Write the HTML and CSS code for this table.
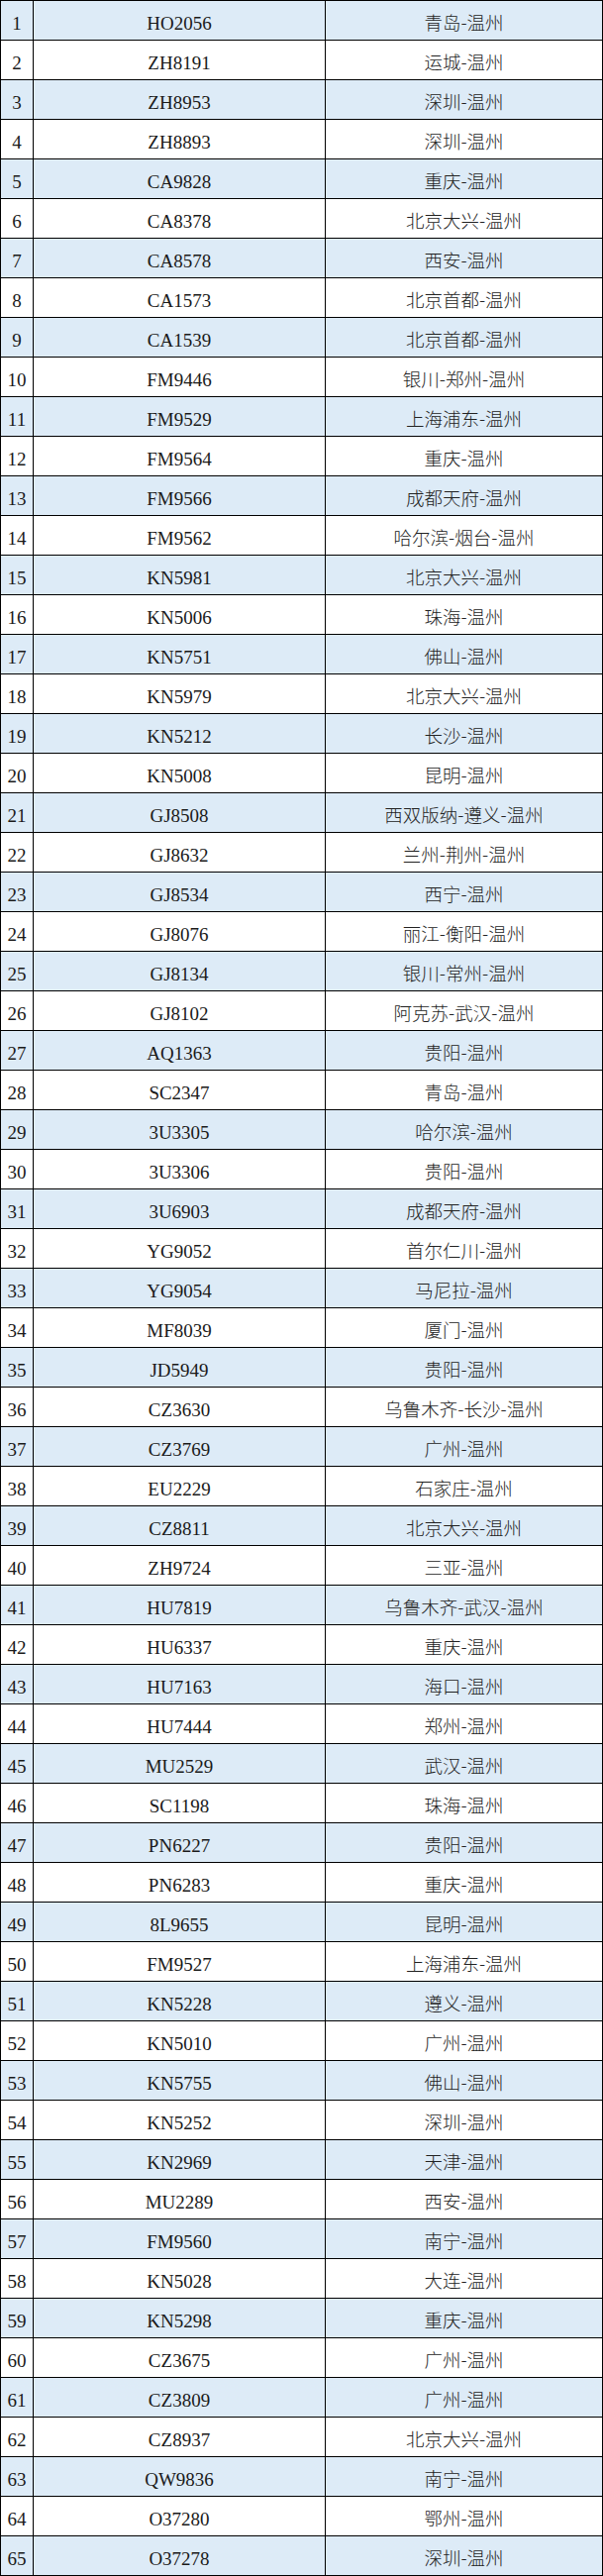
FILE: index.html
```html
<!DOCTYPE html>
<html lang="zh-CN">
<head>
<meta charset="utf-8">
<title>航班列表</title>
<link rel="stylesheet" href="styles.css">
</head>
<body>
<div class="table">
  <div class="row alt"><div class="cell idx">1</div><div class="cell code">HO2056</div><div class="cell route">青岛-温州</div></div>
  <div class="row"><div class="cell idx">2</div><div class="cell code">ZH8191</div><div class="cell route">运城-温州</div></div>
  <div class="row alt"><div class="cell idx">3</div><div class="cell code">ZH8953</div><div class="cell route">深圳-温州</div></div>
  <div class="row"><div class="cell idx">4</div><div class="cell code">ZH8893</div><div class="cell route">深圳-温州</div></div>
  <div class="row alt"><div class="cell idx">5</div><div class="cell code">CA9828</div><div class="cell route">重庆-温州</div></div>
  <div class="row"><div class="cell idx">6</div><div class="cell code">CA8378</div><div class="cell route">北京大兴-温州</div></div>
  <div class="row alt"><div class="cell idx">7</div><div class="cell code">CA8578</div><div class="cell route">西安-温州</div></div>
  <div class="row"><div class="cell idx">8</div><div class="cell code">CA1573</div><div class="cell route">北京首都-温州</div></div>
  <div class="row alt"><div class="cell idx">9</div><div class="cell code">CA1539</div><div class="cell route">北京首都-温州</div></div>
  <div class="row"><div class="cell idx">10</div><div class="cell code">FM9446</div><div class="cell route">银川-郑州-温州</div></div>
  <div class="row alt"><div class="cell idx">11</div><div class="cell code">FM9529</div><div class="cell route">上海浦东-温州</div></div>
  <div class="row"><div class="cell idx">12</div><div class="cell code">FM9564</div><div class="cell route">重庆-温州</div></div>
  <div class="row alt"><div class="cell idx">13</div><div class="cell code">FM9566</div><div class="cell route">成都天府-温州</div></div>
  <div class="row"><div class="cell idx">14</div><div class="cell code">FM9562</div><div class="cell route">哈尔滨-烟台-温州</div></div>
  <div class="row alt"><div class="cell idx">15</div><div class="cell code">KN5981</div><div class="cell route">北京大兴-温州</div></div>
  <div class="row"><div class="cell idx">16</div><div class="cell code">KN5006</div><div class="cell route">珠海-温州</div></div>
  <div class="row alt"><div class="cell idx">17</div><div class="cell code">KN5751</div><div class="cell route">佛山-温州</div></div>
  <div class="row"><div class="cell idx">18</div><div class="cell code">KN5979</div><div class="cell route">北京大兴-温州</div></div>
  <div class="row alt"><div class="cell idx">19</div><div class="cell code">KN5212</div><div class="cell route">长沙-温州</div></div>
  <div class="row"><div class="cell idx">20</div><div class="cell code">KN5008</div><div class="cell route">昆明-温州</div></div>
  <div class="row alt"><div class="cell idx">21</div><div class="cell code">GJ8508</div><div class="cell route">西双版纳-遵义-温州</div></div>
  <div class="row"><div class="cell idx">22</div><div class="cell code">GJ8632</div><div class="cell route">兰州-荆州-温州</div></div>
  <div class="row alt"><div class="cell idx">23</div><div class="cell code">GJ8534</div><div class="cell route">西宁-温州</div></div>
  <div class="row"><div class="cell idx">24</div><div class="cell code">GJ8076</div><div class="cell route">丽江-衡阳-温州</div></div>
  <div class="row alt"><div class="cell idx">25</div><div class="cell code">GJ8134</div><div class="cell route">银川-常州-温州</div></div>
  <div class="row"><div class="cell idx">26</div><div class="cell code">GJ8102</div><div class="cell route">阿克苏-武汉-温州</div></div>
  <div class="row alt"><div class="cell idx">27</div><div class="cell code">AQ1363</div><div class="cell route">贵阳-温州</div></div>
  <div class="row"><div class="cell idx">28</div><div class="cell code">SC2347</div><div class="cell route">青岛-温州</div></div>
  <div class="row alt"><div class="cell idx">29</div><div class="cell code">3U3305</div><div class="cell route">哈尔滨-温州</div></div>
  <div class="row"><div class="cell idx">30</div><div class="cell code">3U3306</div><div class="cell route">贵阳-温州</div></div>
  <div class="row alt"><div class="cell idx">31</div><div class="cell code">3U6903</div><div class="cell route">成都天府-温州</div></div>
  <div class="row"><div class="cell idx">32</div><div class="cell code">YG9052</div><div class="cell route">首尔仁川-温州</div></div>
  <div class="row alt"><div class="cell idx">33</div><div class="cell code">YG9054</div><div class="cell route">马尼拉-温州</div></div>
  <div class="row"><div class="cell idx">34</div><div class="cell code">MF8039</div><div class="cell route">厦门-温州</div></div>
  <div class="row alt"><div class="cell idx">35</div><div class="cell code">JD5949</div><div class="cell route">贵阳-温州</div></div>
  <div class="row"><div class="cell idx">36</div><div class="cell code">CZ3630</div><div class="cell route">乌鲁木齐-长沙-温州</div></div>
  <div class="row alt"><div class="cell idx">37</div><div class="cell code">CZ3769</div><div class="cell route">广州-温州</div></div>
  <div class="row"><div class="cell idx">38</div><div class="cell code">EU2229</div><div class="cell route">石家庄-温州</div></div>
  <div class="row alt"><div class="cell idx">39</div><div class="cell code">CZ8811</div><div class="cell route">北京大兴-温州</div></div>
  <div class="row"><div class="cell idx">40</div><div class="cell code">ZH9724</div><div class="cell route">三亚-温州</div></div>
  <div class="row alt"><div class="cell idx">41</div><div class="cell code">HU7819</div><div class="cell route">乌鲁木齐-武汉-温州</div></div>
  <div class="row"><div class="cell idx">42</div><div class="cell code">HU6337</div><div class="cell route">重庆-温州</div></div>
  <div class="row alt"><div class="cell idx">43</div><div class="cell code">HU7163</div><div class="cell route">海口-温州</div></div>
  <div class="row"><div class="cell idx">44</div><div class="cell code">HU7444</div><div class="cell route">郑州-温州</div></div>
  <div class="row alt"><div class="cell idx">45</div><div class="cell code">MU2529</div><div class="cell route">武汉-温州</div></div>
  <div class="row"><div class="cell idx">46</div><div class="cell code">SC1198</div><div class="cell route">珠海-温州</div></div>
  <div class="row alt"><div class="cell idx">47</div><div class="cell code">PN6227</div><div class="cell route">贵阳-温州</div></div>
  <div class="row"><div class="cell idx">48</div><div class="cell code">PN6283</div><div class="cell route">重庆-温州</div></div>
  <div class="row alt"><div class="cell idx">49</div><div class="cell code">8L9655</div><div class="cell route">昆明-温州</div></div>
  <div class="row"><div class="cell idx">50</div><div class="cell code">FM9527</div><div class="cell route">上海浦东-温州</div></div>
  <div class="row alt"><div class="cell idx">51</div><div class="cell code">KN5228</div><div class="cell route">遵义-温州</div></div>
  <div class="row"><div class="cell idx">52</div><div class="cell code">KN5010</div><div class="cell route">广州-温州</div></div>
  <div class="row alt"><div class="cell idx">53</div><div class="cell code">KN5755</div><div class="cell route">佛山-温州</div></div>
  <div class="row"><div class="cell idx">54</div><div class="cell code">KN5252</div><div class="cell route">深圳-温州</div></div>
  <div class="row alt"><div class="cell idx">55</div><div class="cell code">KN2969</div><div class="cell route">天津-温州</div></div>
  <div class="row"><div class="cell idx">56</div><div class="cell code">MU2289</div><div class="cell route">西安-温州</div></div>
  <div class="row alt"><div class="cell idx">57</div><div class="cell code">FM9560</div><div class="cell route">南宁-温州</div></div>
  <div class="row"><div class="cell idx">58</div><div class="cell code">KN5028</div><div class="cell route">大连-温州</div></div>
  <div class="row alt"><div class="cell idx">59</div><div class="cell code">KN5298</div><div class="cell route">重庆-温州</div></div>
  <div class="row"><div class="cell idx">60</div><div class="cell code">CZ3675</div><div class="cell route">广州-温州</div></div>
  <div class="row alt"><div class="cell idx">61</div><div class="cell code">CZ3809</div><div class="cell route">广州-温州</div></div>
  <div class="row"><div class="cell idx">62</div><div class="cell code">CZ8937</div><div class="cell route">北京大兴-温州</div></div>
  <div class="row alt"><div class="cell idx">63</div><div class="cell code">QW9836</div><div class="cell route">南宁-温州</div></div>
  <div class="row"><div class="cell idx">64</div><div class="cell code">O37280</div><div class="cell route">鄂州-温州</div></div>
  <div class="row alt"><div class="cell idx">65</div><div class="cell code">O37278</div><div class="cell route">深圳-温州</div></div>
</div>
</body>
</html>
```

FILE: styles.css
```css
html, body {
  margin: 0;
  padding: 0;
  background: #ffffff;
}

body {
  font-family: "Liberation Serif", "Noto Sans CJK SC", serif;
  font-size: 19px;
  color: #1a1a1a;
}

.table {
  width: 609px;
  box-sizing: border-box;
  border-top: 1px solid #000;
  border-left: 1px solid #000;
}

.row {
  display: grid;
  grid-template-columns: 33px 295px 280px;
  height: 40px;
  background: #ffffff;
}

.row.alt {
  background: #ddebf7;
}

.cell {
  box-sizing: border-box;
  border-right: 1px solid #000;
  border-bottom: 1px solid #000;
  display: flex;
  align-items: center;
  justify-content: center;
  padding-top: 5px;
  line-height: 1;
  white-space: nowrap;
}

.route {
  padding-top: 3px;
  font-family: "Noto Sans CJK SC", sans-serif;
  font-weight: 300;
  font-size: 18.5px;
  color: #222;
}
```
